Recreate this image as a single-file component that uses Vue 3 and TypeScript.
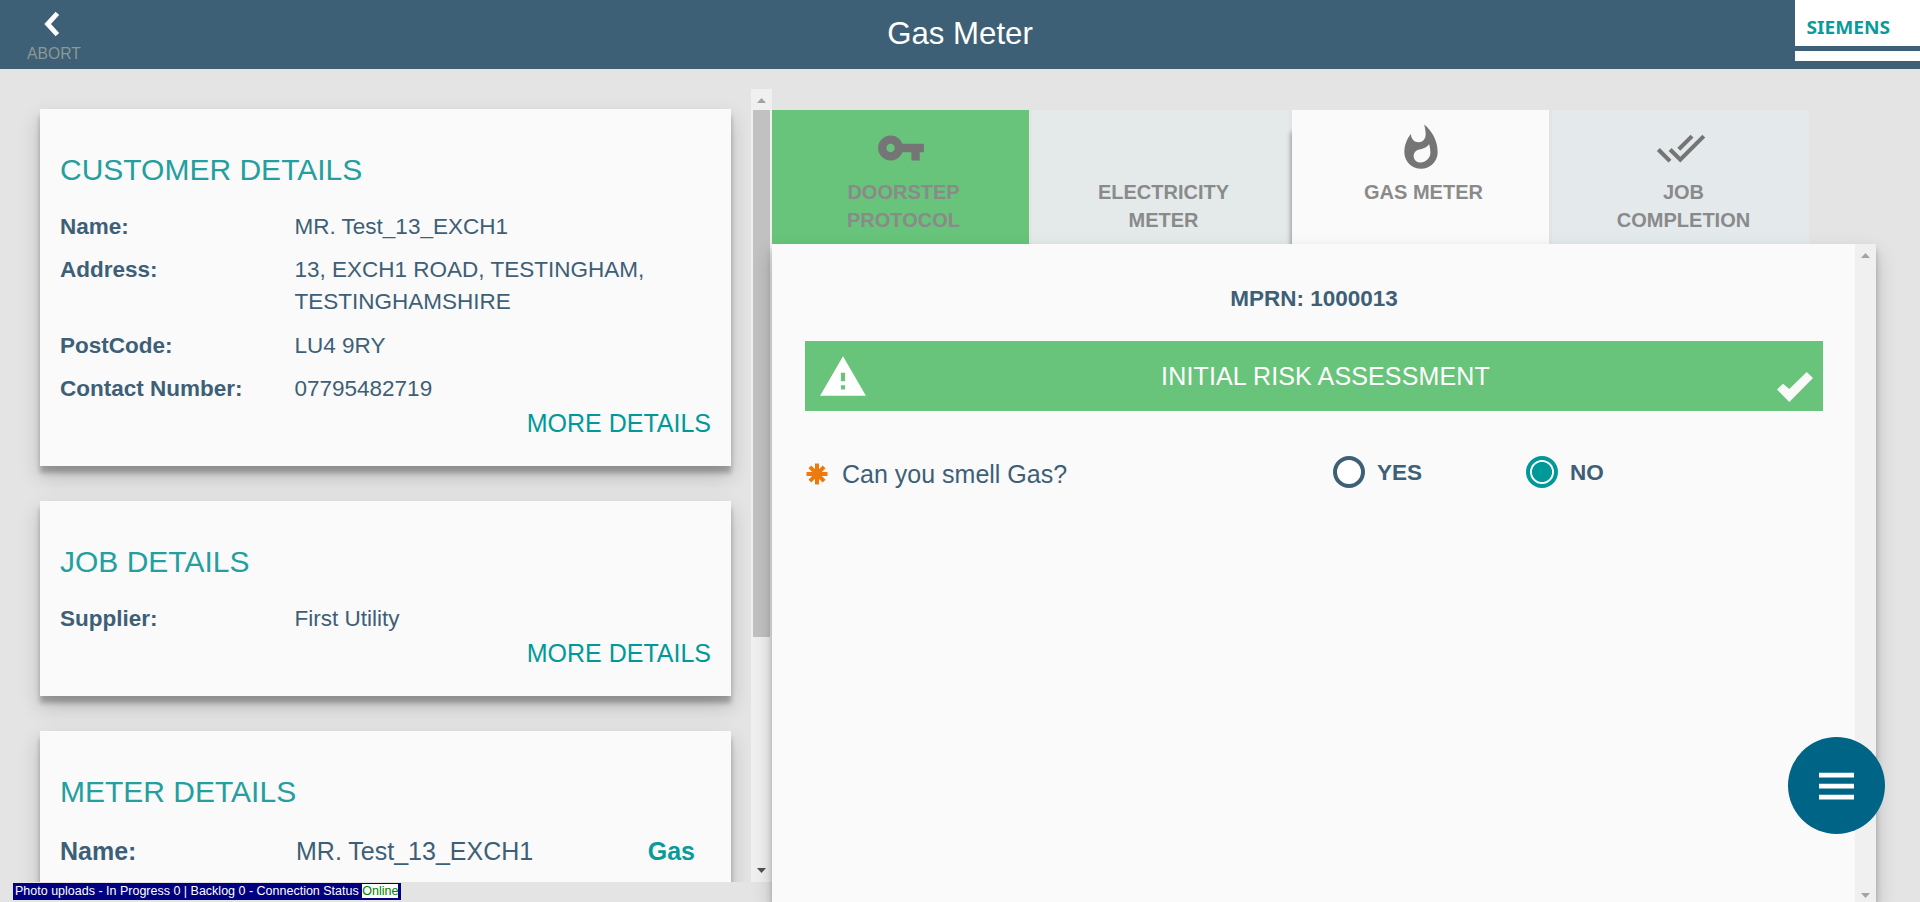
<script setup lang="ts">
import { ref } from 'vue'

interface Row { label: string; value: string; tag?: string }
interface Card { title: string; rows: Row[]; more: boolean; large?: boolean }
interface Tab { lines: string[]; state: string; icon?: string }

const cards: Card[] = [
  {
    title: 'CUSTOMER DETAILS',
    more: true,
    rows: [
      { label: 'Name:', value: 'MR. Test_13_EXCH1' },
      { label: 'Address:', value: '13, EXCH1 ROAD, TESTINGHAM, TESTINGHAMSHIRE' },
      { label: 'PostCode:', value: 'LU4 9RY' },
      { label: 'Contact Number:', value: '07795482719' },
    ],
  },
  { title: 'JOB DETAILS', more: true, rows: [{ label: 'Supplier:', value: 'First Utility' }] },
  {
    title: 'METER DETAILS',
    more: false,
    large: true,
    rows: [{ label: 'Name:', value: 'MR. Test_13_EXCH1', tag: 'Gas' }],
  },
]

const tabs: Tab[] = [
  {
    lines: ['DOORSTEP', 'PROTOCOL'],
    state: 'done',
    icon: 'M12.65 10C11.83 7.67 9.61 6 7 6c-3.31 0-6 2.69-6 6s2.69 6 6 6c2.61 0 4.83-1.67 5.65-4H17v4h4v-4h2v-4H12.65zM7 14c-1.1 0-2-.9-2-2s.9-2 2-2 2 .9 2 2-.9 2-2 2z',
  },
  { lines: ['ELECTRICITY', 'METER'], state: 'idle' },
  {
    lines: ['GAS METER'],
    state: 'active',
    icon: 'M13.5.67s.74 2.65.74 4.8c0 2.06-1.35 3.73-3.41 3.73-2.07 0-3.63-1.67-3.63-3.73l.03-.36C5.21 7.51 4 10.62 4 14c0 4.42 3.58 8 8 8s8-3.58 8-8C20 8.61 17.41 3.8 13.5.67zM11.71 19c-1.78 0-3.22-1.4-3.22-3.14 0-1.62 1.05-2.76 2.81-3.12 1.77-.36 3.6-1.21 4.62-2.58.39 1.29.59 2.65.59 4.04 0 2.65-2.15 4.8-4.8 4.8z',
  },
  {
    lines: ['JOB', 'COMPLETION'],
    state: 'last',
    icon: 'M18 7l-1.41-1.41-6.34 6.34 1.41 1.41L18 7zm4.24-1.41L11.66 16.17 7.48 12l-1.41 1.41L11.66 19l12-12-1.42-1.41zM.41 13.41L6 19l1.41-1.41L1.83 12 .41 13.41z',
  },
]

const options = ['YES', 'NO']
const answer = ref('NO')
</script>

<template>
  <div class="app">
    <header class="topbar">
      <button class="abort">
        <svg width="20" height="28" viewBox="0 0 20 28"><path d="M15.4 3.4L5.6 14l9.8 10.6" fill="none" stroke="#fff" stroke-width="4.8" /></svg>
        <span>ABORT</span>
      </button>
      <h1>Gas Meter</h1>
      <div class="logo">
        <svg width="125" height="46" viewBox="0 0 125 46">
          <text x="11.5" y="33.8" textLength="83.5" lengthAdjust="spacingAndGlyphs">SIEMENS</text>
        </svg>
        <div class="logo-strip"></div>
      </div>
    </header>

    <main class="body">
      <aside class="side">
        <div class="cards">
          <section v-for="card in cards" :key="card.title" class="card" :class="{ large: card.large }">
            <h2>{{ card.title }}</h2>
            <div class="rows">
              <div v-for="row in card.rows" :key="row.label" class="row">
                <strong>{{ row.label }}</strong>
                <span class="value">{{ row.value }}</span>
                <b v-if="row.tag" class="tag">{{ row.tag }}</b>
              </div>
            </div>
            <a v-if="card.more" class="more">MORE DETAILS</a>
          </section>
        </div>
        <div class="track">
          <svg class="up" width="9" height="5" viewBox="0 0 9 5"><path d="M0 5L4.5 0 9 5z" /></svg>
          <div class="thumb"></div>
          <svg class="down dark" width="9" height="5" viewBox="0 0 9 5"><path d="M0 0h9L4.5 5z" /></svg>
        </div>
      </aside>

      <section class="work">
        <nav class="tabs">
          <div v-for="tab in tabs" :key="tab.lines[0]" class="tab" :class="tab.state">
            <svg width="50" height="50" viewBox="0 0 24 24"><path v-if="tab.icon" :d="tab.icon" /></svg>
            <div class="tab-label"><span v-for="line in tab.lines" :key="line">{{ line }}</span></div>
          </div>
        </nav>
        <div class="panel">
          <div class="content">
            <p class="mprn">MPRN: 1000013</p>
            <div class="banner">
              <svg class="warn" width="50" height="50" viewBox="0 0 24 24"><path d="M1 21h22L12 2 1 21zm12-3h-2v-2h2v2zm0-4h-2v-4h2v4z" /></svg>
              <span>INITIAL RISK ASSESSMENT</span>
              <svg class="tick" width="36" height="30" viewBox="0 0 36 30"><path d="M0 17.5L6 11.7 12.3 17 29.7 0 36 6 12.3 30z" /></svg>
            </div>
            <div class="question">
              <svg class="star" width="22" height="22" viewBox="0 0 22 22">
                <path d="M11 .5v21M.5 11h21M3.9 3.9l14.2 14.2M18.1 3.9L3.9 18.1" />
              </svg>
              <span class="prompt">Can you smell Gas?</span>
              <label v-for="opt in options" :key="opt" class="option" @click="answer = opt">
                <i class="radio" :class="{ on: answer === opt }"></i><span>{{ opt }}</span>
              </label>
            </div>
          </div>
          <div class="track right">
            <svg class="up" width="9" height="5" viewBox="0 0 9 5"><path d="M0 5L4.5 0 9 5z" /></svg>
            <svg class="down" width="9" height="5" viewBox="0 0 9 5"><path d="M0 0h9L4.5 5z" /></svg>
          </div>
        </div>
      </section>
    </main>

    <div class="status">Photo uploads - In Progress 0 | Backlog 0 - Connection Status <span>Online</span></div>
    <button class="fab">
      <svg width="35" height="28" viewBox="0 0 35 28"><path d="M0 .8h35v4.6H0zM0 11.8h35v4.6H0zM0 22.8h35v4.6H0z" fill="#fff" /></svg>
    </button>
  </div>
</template>

<style>
body { margin: 0; overflow: hidden; }
</style>

<style scoped>
.app {
  position: relative;
  height: 902px;
  overflow: hidden;
  background: #e4e4e4;
  color: #3d5f77;
  font-family: "Liberation Sans", Arial, sans-serif;
}
h1, h2, p { margin: 0; font-weight: 400; }
button { border: 0; padding: 0; font-family: inherit; }

.topbar {
  display: grid;
  grid-template-columns: 125px 1fr 125px;
  height: 69px;
  background: #3e6076;
}
.abort {
  display: flex;
  flex-direction: column;
  align-items: flex-start;
  padding: 10px 0 0 27px;
  background: none;
  color: #8c9797;
  font-size: 15.7px;
  line-height: 18px;
}
.abort svg { margin-left: 15px; }
.abort span { margin-top: 7px; }
.topbar h1 {
  padding-top: 16px;
  color: #fff;
  font-size: 31.2px;
  line-height: 36px;
  text-align: center;
}
.logo { height: 61px; background: #fff; }
.logo svg { display: block; }
.logo text { fill: #099a9a; font: 700 18px "Noto Sans", sans-serif; }
.logo-strip { height: 5px; background: #3e6076; }

.body { display: flex; height: 833px; }
.side { display: flex; width: 772px; height: 793px; margin-top: 20px; overflow: hidden; }
.cards {
  display: flex;
  flex: 1;
  flex-direction: column;
  gap: 35px;
  padding: 20px 20px 0 40px;
}
.card {
  flex: none;
  padding: 44px 20px 24.9px;
  background: #fafafa;
  box-shadow: 0 10px 20px rgba(0, 0, 0, 0.19), 0 7px 5px rgba(0, 0, 0, 0.26);
}
.card h2 { color: #239f9f; font-size: 30px; line-height: 33px; }
.rows { display: flex; flex-direction: column; gap: 11.1px; margin-top: 25px; }
.row {
  display: grid;
  grid-template-columns: 234.5px 1fr auto;
  font-size: 22.5px;
  line-height: 32.14px;
}
.large .row { grid-template-columns: 236px 1fr auto; font-size: 25px; line-height: 36px; }
.large { min-height: 160px; }
.tag { margin-right: 16px; color: #099a9a; }
.more { display: block; color: #009999; font-size: 25px; line-height: 36px; text-align: right; }

.track {
  display: flex;
  flex-direction: column;
  align-items: center;
  width: 21px;
  background: #f0f0f0;
}
.track svg { fill: #a3a3a3; }
.track .dark { fill: #505050; }
.up { margin: 9px 0 7px; }
.down { margin: auto 0 9px; }
.thumb { width: 17px; height: 527px; background: #c1c1c1; }
.right .down { margin-bottom: 4px; }

.work { display: flex; flex-direction: column; width: 1104px; padding-top: 41px; }
.tabs { display: flex; height: 134px; }
.tab {
  position: relative;
  display: flex;
  flex-direction: column;
  align-items: center;
  width: 257px;
  border-right: 3px solid #e4e4e4;
}
.tab > svg { margin-top: 13px; fill: #757575; }
.tab-label {
  display: flex;
  flex-direction: column;
  margin-top: 4.5px;
  padding-left: 6px;
  color: #8a8a8a;
  font-size: 20px;
  font-weight: 700;
  line-height: 28px;
  text-align: center;
}
.done { background: #68c47a; }
.idle { background: #e4eaea; }
.active { background: #fafafa; box-shadow: -1px 22px 5px rgba(0, 0, 0, 0.35); }
.last { background: #e4eaec; border-color: transparent; background-clip: padding-box; }

.panel {
  position: relative;
  display: flex;
  flex: 1;
  background: #fafafa;
  box-shadow: 0 10px 20px rgba(0, 0, 0, 0.19), 0 6px 6px rgba(0, 0, 0, 0.23);
}
.content { flex: 1; padding: 39px 32px 0 33px; }
.mprn { font-size: 22.5px; font-weight: 700; line-height: 32px; text-align: center; }
.banner {
  display: flex;
  align-items: center;
  height: 70px;
  margin-top: 26px;
  padding: 0 10px 0 13px;
  background: #68c47a;
  color: #fff;
  font-size: 25px;
}
.banner span { flex: 1; padding-left: 6px; letter-spacing: 0.14px; text-align: center; }
.banner svg { fill: #fff; }
.banner .warn { margin-top: 1px; }
.banner .tick { margin-top: 22px; fill: #fafafa; }
.question { display: flex; align-items: center; height: 32px; margin-top: 45px; }
.star { margin: 3px 14px 0 1px; }
.star path { fill: none; stroke: #ec7a0c; stroke-width: 4; }
.prompt { width: 491px; padding-top: 3px; font-size: 25px; line-height: 36px; }
.option { display: flex; align-items: center; width: 193px; font-size: 22.5px; font-weight: 700; line-height: 32px; }
.option span { padding-top: 2px; }
.radio {
  box-sizing: border-box;
  width: 32px;
  height: 32px;
  margin-right: 12px;
  border: 4px solid #3e6076;
  border-radius: 50%;
  background: #fff;
}
.radio.on { border-color: #009999; background: radial-gradient(circle, #009999 9.7px, #fff 10.3px); }

.status {
  position: absolute;
  left: 13px;
  bottom: 2px;
  box-sizing: border-box;
  width: 388px;
  height: 17px;
  padding: 1px 2px;
  background: #000080;
  color: #fff;
  font-size: 12.5px;
  line-height: 14px;
  white-space: nowrap;
}
.status span { display: inline-block; height: 14px; background: #fff; color: #008000; }
.fab {
  position: absolute;
  left: 1788px;
  top: 737px;
  display: flex;
  align-items: center;
  justify-content: center;
  width: 97px;
  height: 97px;
  border-radius: 50%;
  background: #006487;
}
</style>
